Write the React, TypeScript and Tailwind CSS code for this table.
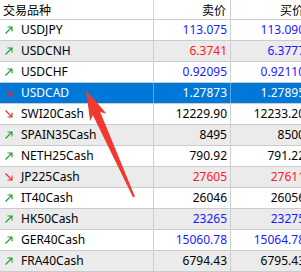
type Dir = "up" | "down";

interface Quote {
  symbol: string;
  dir: Dir;
  bid: string;
  ask: string;
  bidColor: string;
  askColor: string;
}

const BLUE = "text-[#1a1aff]";
const RED = "text-[#ff1a1a]";
const BLACK = "text-black";

const quotes: Quote[] = [
  { symbol: "USDJPY", dir: "up", bid: "113.075", ask: "113.090", bidColor: BLUE, askColor: BLUE },
  { symbol: "USDCNH", dir: "up", bid: "6.3741", ask: "6.3777", bidColor: RED, askColor: BLUE },
  { symbol: "USDCHF", dir: "up", bid: "0.92095", ask: "0.92110", bidColor: BLUE, askColor: BLUE },
  { symbol: "USDCAD", dir: "down", bid: "1.27873", ask: "1.27895", bidColor: BLACK, askColor: BLACK },
  { symbol: "SWI20Cash", dir: "down", bid: "12229.90", ask: "12233.20", bidColor: BLACK, askColor: BLACK },
  { symbol: "SPAIN35Cash", dir: "up", bid: "8495", ask: "8500", bidColor: BLACK, askColor: BLACK },
  { symbol: "NETH25Cash", dir: "up", bid: "790.92", ask: "791.22", bidColor: BLACK, askColor: BLACK },
  { symbol: "JP225Cash", dir: "down", bid: "27605", ask: "27611", bidColor: RED, askColor: RED },
  { symbol: "IT40Cash", dir: "up", bid: "26046", ask: "26056", bidColor: BLACK, askColor: BLACK },
  { symbol: "HK50Cash", dir: "up", bid: "23265", ask: "23275", bidColor: BLUE, askColor: BLUE },
  { symbol: "GER40Cash", dir: "up", bid: "15060.78", ask: "15064.78", bidColor: BLUE, askColor: BLUE },
  { symbol: "FRA40Cash", dir: "up", bid: "6794.43", ask: "6795.43", bidColor: BLACK, askColor: BLACK },
];

const SELECTED = 3;

function TrendIcon({ dir }: { dir: Dir }) {
  const color = dir === "up" ? "#1f9b2a" : "#e2302a";
  return (
    <svg width="8" height="8" viewBox="0 0 8 8" className="shrink-0">
      {dir === "up" ? (
        <path d="M0.5 7.5 L7 1 M2.5 1 H7 V5.5" stroke={color} strokeWidth="1.1" fill="none" />
      ) : (
        <path d="M0.5 0.5 L7 7 M2.5 7 H7 V2.5" stroke={color} strokeWidth="1.1" fill="none" />
      )}
    </svg>
  );
}

function Pointer() {
  return (
    <svg
      className="absolute left-0 top-0 pointer-events-none"
      width="301"
      height="272"
      viewBox="0 0 301 272"
    >
      <polygon
        points="86,90 106.5,113.7 100.2,112.1 134.9,196.6 133.1,197.4 92.9,115.3 90.1,121.1"
        fill="#ee3a2f"
      />
    </svg>
  );
}

export default function App() {
  return (
    <div className="relative w-[301px] h-[272px] overflow-hidden bg-white font-['Noto_Sans','Noto_Sans_CJK_SC',sans-serif] text-[12px] leading-[19px]">
      <div className="flex h-[20px] border-b border-[#cfcfcf] text-black">
        <div className="w-[154px] shrink-0 border-r border-[#d6d6d6] pl-[3px] font-['Noto_Sans_CJK_SC',sans-serif]">
          交易品种
        </div>
        <div className="w-[77px] shrink-0 border-r border-[#cfcfcf] pr-[4px] text-right font-['Noto_Sans_CJK_SC',sans-serif]">
          卖价
        </div>
        <div className="w-[77px] shrink-0 pr-[4px] text-right font-['Noto_Sans_CJK_SC',sans-serif]">
          买价
        </div>
      </div>

      {quotes.map((q, i) => {
        const selected = i === SELECTED;
        const bg = selected ? "bg-[#0078d7]" : i % 2 === 1 ? "bg-[#ebebeb]" : "bg-white";
        const vline = selected ? "border-[#5aa6e6]" : "border-[#cfcfcf]";
        return (
          <div
            key={q.symbol}
            className={`flex h-[21px] leading-[20px] border-b border-[#cbcbcb] ${bg}`}
          >
            <div className={`w-[154px] shrink-0 border-r ${vline} flex items-center`}>
              <div className="w-[21px] shrink-0 flex justify-start pl-[5px]">
                <TrendIcon dir={q.dir} />
              </div>
              <span className={selected ? "text-white" : "text-black"}>{q.symbol}</span>
            </div>
            <div
              className={`w-[77px] shrink-0 border-r ${vline} pr-[3px] text-right ${
                selected ? "text-white" : q.bidColor
              }`}
            >
              {q.bid}
            </div>
            <div
              className={`w-[77px] shrink-0 pr-[3px] text-right whitespace-nowrap ${
                selected ? "text-white" : q.askColor
              }`}
            >
              {q.ask}
            </div>
          </div>
        );
      })}

      <Pointer />
    </div>
  );
}
